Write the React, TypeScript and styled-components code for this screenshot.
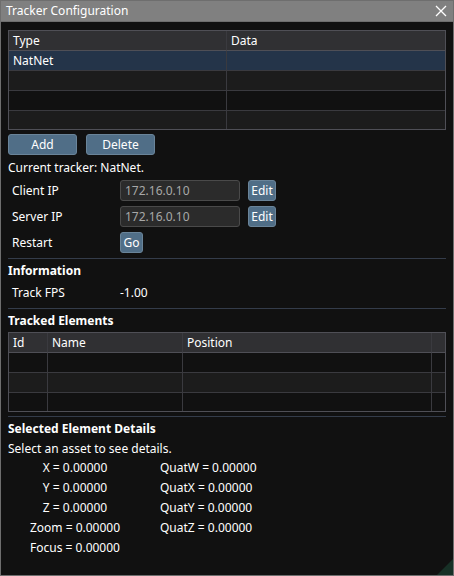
import React from "react";
import styled, { createGlobalStyle } from "styled-components";

const GlobalStyle = createGlobalStyle`
  html, body {
    margin: 0;
    padding: 0;
    background: #111111;
  }
  body {
    font-family: "Noto Sans", "Open Sans", sans-serif;
    font-size: 12px;
    color: #ffffff;
  }
`;

const Window = styled.div`
  position: relative;
  box-sizing: border-box;
  width: 454px;
  height: 576px;
  border: 1px solid #6e6e6e;
  background: #111111;
  display: flex;
  flex-direction: column;
  overflow: hidden;
`;

const TitleBar = styled.div`
  height: 20px;
  background: #808080;
  border-bottom: 1px solid #6e6e6e;
  display: flex;
  align-items: center;
  justify-content: space-between;
  padding: 0 6px 0 5px;
  line-height: 20px;
`;

const CloseIcon = styled.svg`
  width: 12px;
  height: 12px;
`;

const Body = styled.div`
  padding: 8px 7px 0 7px;
  display: flex;
  flex-direction: column;
`;

const Table = styled.div<{ $cols: string; $top?: number }>`
  display: grid;
  grid-template-columns: ${(p) => p.$cols};
  border: 1px solid #4f4f56;
  width: 438px;
  box-sizing: border-box;
  margin-top: ${(p) => p.$top ?? 0}px;
`;

const HeadCell = styled.div<{ $last?: boolean }>`
  height: 19px;
  line-height: 19px;
  padding-left: 4px;
  background: #303033;
  border-right: ${(p) => (p.$last ? "none" : "1px solid #3a3a3f")};
  border-bottom: 1px solid #4f4f56;
  white-space: nowrap;
  overflow: hidden;
`;

const Cell = styled.div<{ $bg: string; $last?: boolean; $bottom?: boolean }>`
  height: ${(p) => (p.$bottom ? "18px" : "19px")};
  line-height: 19px;
  padding-left: 4px;
  background: ${(p) => p.$bg};
  border-right: ${(p) => (p.$last ? "none" : "1px solid #3a3a3f")};
  border-bottom: ${(p) => (p.$bottom ? "none" : "1px solid #3a3a3f")};
`;

const ButtonRow = styled.div`
  display: flex;
  gap: 9px;
  margin-top: 4px;
`;

const Button = styled.button<{ $w: number }>`
  width: ${(p) => p.$w}px;
  height: 21px;
  box-sizing: border-box;
  padding: 0;
  background: #506e87;
  border: 1px solid #6a8499;
  border-radius: 3px;
  color: #ffffff;
  font-family: "Noto Sans", "Open Sans", sans-serif;
  font-size: 12px;
  line-height: 19px;
`;

const Line = styled.div<{ $top?: number }>`
  margin-top: ${(p) => p.$top ?? 4}px;
  height: 17px;
  line-height: 17px;
  white-space: nowrap;
`;

const FieldRow = styled.div<{ $top?: number }>`
  display: flex;
  align-items: center;
  margin-top: ${(p) => p.$top ?? 5}px;
  height: 21px;
`;

const FieldLabel = styled.div`
  width: 108px;
  padding-left: 4px;
  white-space: nowrap;
`;

const Input = styled.div`
  width: 120px;
  height: 21px;
  box-sizing: border-box;
  background: #2b2b2b;
  border: 1px solid #4a4a4a;
  border-radius: 3px;
  color: #a8a8a8;
  padding-left: 4px;
  line-height: 19px;
  margin-right: 8px;
`;

const Separator = styled.div<{ $top: number }>`
  margin-top: ${(p) => p.$top}px;
  height: 1px;
  width: 438px;
  background: #343c4a;
`;

const Heading = styled.div`
  margin-top: 3px;
  height: 17px;
  line-height: 17px;
  font-weight: 700;
`;

const InfoRow = styled.div`
  display: flex;
  margin-top: 5px;
  height: 17px;
  line-height: 17px;
`;

const DetailGrid = styled.div`
  display: grid;
  grid-template-columns: 134px 160px;
  column-gap: 18px;
  row-gap: 3px;
  margin-top: 2px;
`;

const DetailLeft = styled.div`
  text-align: center;
  height: 17px;
  line-height: 17px;
  white-space: nowrap;
`;

const DetailRight = styled.div`
  height: 17px;
  line-height: 17px;
  white-space: nowrap;
`;

const Grip = styled.svg`
  position: absolute;
  right: 0;
  bottom: 0;
  width: 16px;
  height: 16px;
`;

const trackerRows = [
  { type: "NatNet", data: "", bg: "#243449" },
  { type: "", data: "", bg: "#1c1c1c" },
  { type: "", data: "", bg: "#111111" },
  { type: "", data: "", bg: "#1c1c1c" },
];

const elementRows = ["#111111", "#1c1c1c", "#111111"];

const details = [
  ["X = 0.00000", "QuatW = 0.00000"],
  ["Y = 0.00000", "QuatX = 0.00000"],
  ["Z = 0.00000", "QuatY = 0.00000"],
  ["Zoom = 0.00000", "QuatZ = 0.00000"],
  ["Focus = 0.00000", ""],
];

export default function App() {
  return (
    <>
      <GlobalStyle />
      <Window>
        <TitleBar>
          <span>Tracker Configuration</span>
          <CloseIcon viewBox="0 0 12 12">
            <path d="M1 1 L11 11 M11 1 L1 11" stroke="#ffffff" strokeWidth="1.3" />
          </CloseIcon>
        </TitleBar>
        <Body>
          <Table $cols="218px 1fr">
            <HeadCell>Type</HeadCell>
            <HeadCell $last>Data</HeadCell>
            {trackerRows.map((r, i) => (
              <React.Fragment key={i}>
                <Cell $bg={r.bg} $bottom={i === trackerRows.length - 1}>
                  {r.type}
                </Cell>
                <Cell $bg={r.bg} $last $bottom={i === trackerRows.length - 1}>
                  {r.data}
                </Cell>
              </React.Fragment>
            ))}
          </Table>

          <ButtonRow>
            <Button $w={69}>Add</Button>
            <Button $w={69}>Delete</Button>
          </ButtonRow>

          <Line $top={4}>Current tracker: NatNet.</Line>

          <FieldRow $top={4}>
            <FieldLabel>Client IP</FieldLabel>
            <Input>172.16.0.10</Input>
            <Button $w={28}>Edit</Button>
          </FieldRow>
          <FieldRow>
            <FieldLabel>Server IP</FieldLabel>
            <Input>172.16.0.10</Input>
            <Button $w={28}>Edit</Button>
          </FieldRow>
          <FieldRow>
            <FieldLabel>Restart</FieldLabel>
            <Button $w={23}>Go</Button>
          </FieldRow>

          <Separator $top={5} />
          <Heading>Information</Heading>
          <InfoRow>
            <FieldLabel>Track FPS</FieldLabel>
            <span>-1.00</span>
          </InfoRow>

          <Separator $top={7} />
          <Heading>Tracked Elements</Heading>
          <Table $cols="39px 135px 249px 1fr" $top={3}>
            <HeadCell>Id</HeadCell>
            <HeadCell>Name</HeadCell>
            <HeadCell>Position</HeadCell>
            <HeadCell $last />
            {elementRows.map((bg, i) => (
              <React.Fragment key={i}>
                <Cell $bg={bg} $bottom={i === elementRows.length - 1} />
                <Cell $bg={bg} $bottom={i === elementRows.length - 1} />
                <Cell $bg={bg} $bottom={i === elementRows.length - 1} />
                <Cell $bg={bg} $last $bottom={i === elementRows.length - 1} />
              </React.Fragment>
            ))}
          </Table>

          <Separator $top={4} />
          <Heading>Selected Element Details</Heading>
          <Line $top={3}>Select an asset to see details.</Line>
          <DetailGrid>
            {details.map(([l, r], i) => (
              <React.Fragment key={i}>
                <DetailLeft>{l}</DetailLeft>
                <DetailRight>{r}</DetailRight>
              </React.Fragment>
            ))}
          </DetailGrid>
        </Body>
        <Grip viewBox="0 0 16 16">
          <path d="M16 0 L16 16 L0 16 Z" fill="#1d4a38" opacity="0.55" />
        </Grip>
      </Window>
    </>
  );
}
